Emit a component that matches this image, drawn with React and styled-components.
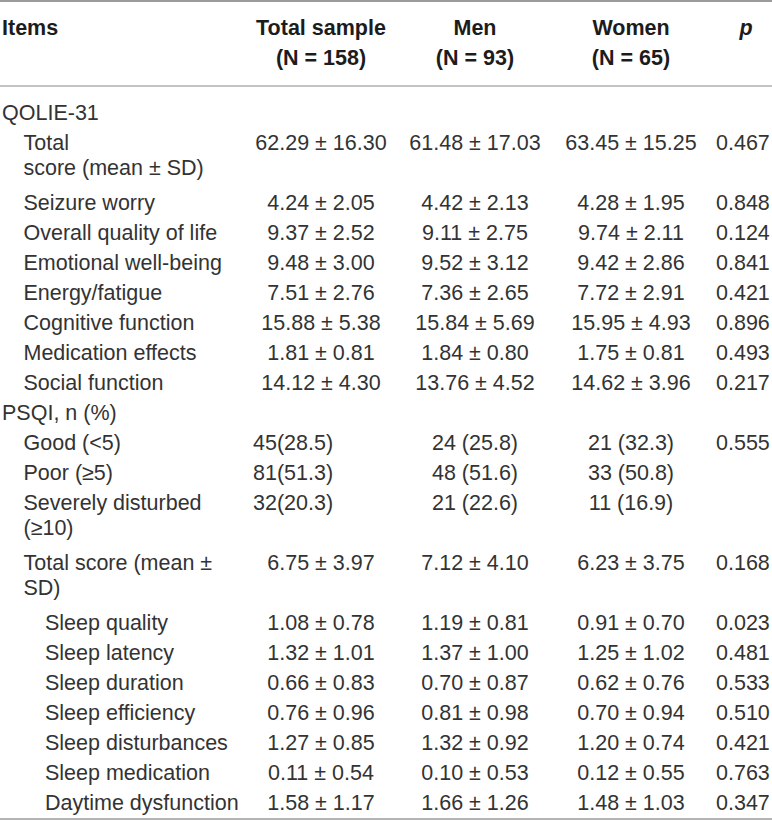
import React from 'react'
import styled, { createGlobalStyle } from 'styled-components'

const GlobalStyle = createGlobalStyle`
  html, body {
    margin: 0;
    padding: 0;
    background: #ffffff;
  }
  body {
    font-family: "Liberation Sans", Arial, Helvetica, sans-serif;
  }
`;

const Table = styled.div`
  width: 772px;
  display: flex;
  flex-direction: column;
  border-top: 2px solid #9b9b9b;
  border-bottom: 2px solid #b4b4b4;
  font-size: 21.5px;
  color: #333333;
`;

const Grid = styled.div`
  display: grid;
  grid-template-columns: 250px 142px 166px 146px 68px;
`;

const HeadRow = styled(Grid)`
  padding: 11px 0 12px;
  border-bottom: 2px solid #c4c4c4;
  line-height: 30px;
  font-weight: 700;
  color: #1c1c1c;
`;

const Body = styled.div`
  display: flex;
  flex-direction: column;
  padding: 11px 0 0;
`;

const Row = styled(Grid)`
  line-height: 25px;
  padding: 2.5px 0 ${({ $tall }) => ($tall ? '7.5px' : '2.5px')};
`;

const HeadCell = styled.div`
  text-align: ${({ $left }) => ($left ? 'left' : 'center')};
  padding-left: ${({ $left }) => ($left ? '2px' : '0')};
  ${({ $p }) => $p && `padding-left: 16px; font-style: italic;`}
`;

const Label = styled.div`
  padding-left: ${({ $level }) => 2 + ($level || 0) * 21.5}px;
  white-space: nowrap;
`;

const Cell = styled.div`
  text-align: ${({ $left }) => ($left ? 'left' : 'center')};
  padding-left: ${({ $left }) => ($left ? '3px' : '0')};
  white-space: nowrap;
`;

const PCell = styled.div`
  padding-left: 12px;
  white-space: nowrap;
`;

const rows = [
  { label: 'QOLIE-31', level: 0 },
  { label: ['Total', 'score (mean ± SD)'], level: 1, vals: ['62.29 ± 16.30', '61.48 ± 17.03', '63.45 ± 15.25'], p: '0.467' },
  { label: 'Seizure worry', level: 1, vals: ['4.24 ± 2.05', '4.42 ± 2.13', '4.28 ± 1.95'], p: '0.848' },
  { label: 'Overall quality of life', level: 1, vals: ['9.37 ± 2.52', '9.11 ± 2.75', '9.74 ± 2.11'], p: '0.124' },
  { label: 'Emotional well-being', level: 1, vals: ['9.48 ± 3.00', '9.52 ± 3.12', '9.42 ± 2.86'], p: '0.841' },
  { label: 'Energy/fatigue', level: 1, vals: ['7.51 ± 2.76', '7.36 ± 2.65', '7.72 ± 2.91'], p: '0.421' },
  { label: 'Cognitive function', level: 1, vals: ['15.88 ± 5.38', '15.84 ± 5.69', '15.95 ± 4.93'], p: '0.896' },
  { label: 'Medication effects', level: 1, vals: ['1.81 ± 0.81', '1.84 ± 0.80', '1.75 ± 0.81'], p: '0.493' },
  { label: 'Social function', level: 1, vals: ['14.12 ± 4.30', '13.76 ± 4.52', '14.62 ± 3.96'], p: '0.217' },
  { label: 'PSQI, n (%)', level: 0 },
  { label: 'Good (<5)', level: 1, vals: ['45(28.5)', '24 (25.8)', '21 (32.3)'], p: '0.555', leftFirst: true },
  { label: 'Poor (≥5)', level: 1, vals: ['81(51.3)', '48 (51.6)', '33 (50.8)'], p: '', leftFirst: true },
  { label: ['Severely disturbed', '(≥10)'], level: 1, vals: ['32(20.3)', '21 (22.6)', '11 (16.9)'], p: '', leftFirst: true },
  { label: ['Total score (mean ±', 'SD)'], level: 1, vals: ['6.75 ± 3.97', '7.12 ± 4.10', '6.23 ± 3.75'], p: '0.168' },
  { label: 'Sleep quality', level: 2, vals: ['1.08 ± 0.78', '1.19 ± 0.81', '0.91 ± 0.70'], p: '0.023' },
  { label: 'Sleep latency', level: 2, vals: ['1.32 ± 1.01', '1.37 ± 1.00', '1.25 ± 1.02'], p: '0.481' },
  { label: 'Sleep duration', level: 2, vals: ['0.66 ± 0.83', '0.70 ± 0.87', '0.62 ± 0.76'], p: '0.533' },
  { label: 'Sleep efficiency', level: 2, vals: ['0.76 ± 0.96', '0.81 ± 0.98', '0.70 ± 0.94'], p: '0.510' },
  { label: 'Sleep disturbances', level: 2, vals: ['1.27 ± 0.85', '1.32 ± 0.92', '1.20 ± 0.74'], p: '0.421' },
  { label: 'Sleep medication', level: 2, vals: ['0.11 ± 0.54', '0.10 ± 0.53', '0.12 ± 0.55'], p: '0.763' },
  { label: 'Daytime dysfunction', level: 2, vals: ['1.58 ± 1.17', '1.66 ± 1.26', '1.48 ± 1.03'], p: '0.347' },
];

const App = () => {
  return (
    <>
      <GlobalStyle />
      <Table>
        <HeadRow>
          <HeadCell $left>Items</HeadCell>
          <HeadCell>Total sample<br />(N = 158)</HeadCell>
          <HeadCell>Men<br />(N = 93)</HeadCell>
          <HeadCell>Women<br />(N = 65)</HeadCell>
          <HeadCell $p>p</HeadCell>
        </HeadRow>
        <Body>
          {rows.map((row, i) => {
            const tall = Array.isArray(row.label);
            return (
              <Row key={i} $tall={tall}>
                <Label $level={row.level}>
                  {tall ? (
                    <>
                      {row.label[0]}
                      <br />
                      {row.label[1]}
                    </>
                  ) : (
                    row.label
                  )}
                </Label>
                {row.vals ? (
                  <>
                    <Cell $left={row.leftFirst}>{row.vals[0]}</Cell>
                    <Cell>{row.vals[1]}</Cell>
                    <Cell>{row.vals[2]}</Cell>
                    <PCell>{row.p}</PCell>
                  </>
                ) : null}
              </Row>
            );
          })}
        </Body>
      </Table>
    </>
  )
}

export default App
